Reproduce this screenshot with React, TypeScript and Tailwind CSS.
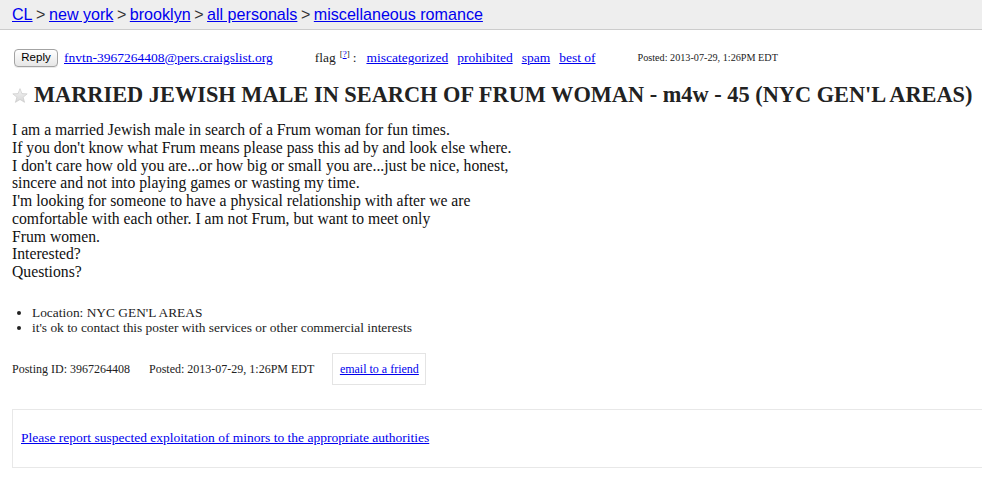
import React from 'react';

const serif = { fontFamily: '"Liberation Serif", "Times New Roman", serif' };

const crumbs = ['CL', 'new york', 'brooklyn', 'all personals', 'miscellaneous romance'];
const flags = ['miscategorized', 'prohibited', 'spam', 'best of'];

const bodyLines = [
  'I am a married Jewish male in search of a Frum woman for fun times.',
  "If you don't know what Frum means please pass this ad by and look else where.",
  "I don't care how old you are...or how big or small you are...just be nice, honest,",
  'sincere and not into playing games or wasting my time.',
  "I'm looking for someone to have a physical relationship with after we are",
  'comfortable with each other. I am not Frum, but want to meet only',
  'Frum women.',
  'Interested?',
  'Questions?',
];

const Star = () => (
  <svg width="16" height="15" viewBox="0 0 24 23" className="shrink-0">
    <defs>
      <linearGradient id="sg" x1="0" y1="0" x2="0" y2="1">
        <stop offset="0" stopColor="#f4f4f4" />
        <stop offset="1" stopColor="#d6d6d6" />
      </linearGradient>
    </defs>
    <polygon
      points="12,1 15,8.6 23,9 16.8,14.2 19,22 12,17.6 5,22 7.2,14.2 1,9 9,8.6"
      fill="url(#sg)"
      stroke="#c8c8c8"
      strokeWidth="1"
    />
  </svg>
);

export default function App() {
  return (
    <div className="min-h-[484px] bg-white text-[#222]" style={serif}>
      {/* breadcrumb bar */}
      <div
        className="h-[30px] bg-[#eeeeee] border-b border-[#cccccc] flex items-center px-3 text-[16.1px] text-[#333]"
        style={{ fontFamily: '"Liberation Sans", Arial, sans-serif' }}
      >
        {crumbs.map((c, i) => (
          <React.Fragment key={c}>
            {i > 0 && <span className="mx-[3.5px]">&gt;</span>}
            <a href="#" className="text-[#0000ee] underline">{c}</a>
          </React.Fragment>
        ))}
      </div>

      <div className="pl-3">
        {/* reply / flag row */}
        <div className="flex items-center mt-[19px] h-[18px] text-[13.5px]">
          <button
            className="ml-[2px] h-[18px] w-[44px] rounded-[4px] border border-[#a3a3a3] bg-gradient-to-b from-white to-[#e6e6e6] text-[11.5px] text-black leading-none shadow-[0_1px_0_rgba(0,0,0,0.08)]"
            style={{ fontFamily: '"Liberation Sans", Arial, sans-serif' }}
          >
            Reply
          </button>
          <a href="#" className="ml-[6px] text-[#0000ee] underline">fnvtn-3967264408@pers.craigslist.org</a>
          <span className="ml-[42px] text-[#222]">flag</span>
          <sup className="ml-[4px] text-[9px] text-[#222]">
            [<a href="#" className="text-[#0000ee] underline">?</a>]
          </sup>
          <span className="ml-[3px]">:</span>
          <div className="ml-[10px] flex gap-[9px]">
            {flags.map((f) => (
              <a key={f} href="#" className="text-[#0000ee] underline">{f}</a>
            ))}
          </div>
          <span className="ml-[42px] text-[10.2px] text-[#222]">Posted: 2013-07-29, 1:26PM EDT</span>
        </div>

        {/* title */}
        <div className="flex items-center mt-[15px] gap-[6px]">
          <Star />
          <h2 className="text-[22.35px] font-bold leading-[26px] text-[#222] whitespace-nowrap">
            MARRIED JEWISH MALE IN SEARCH OF FRUM WOMAN - m4w - 45 (NYC GEN'L AREAS)
          </h2>
        </div>

        {/* body */}
        <div className="mt-[13px] text-[15.7px] leading-[17.75px] text-[#111]">
          {bodyLines.map((l) => (
            <div key={l}>{l}</div>
          ))}
        </div>

        {/* attributes */}
        <ul className="mt-[24px] text-[13.4px] leading-[15px] list-disc pl-5">
          <li>Location: NYC GEN'L AREAS</li>
          <li>it's ok to contact this poster with services or other commercial interests</li>
        </ul>

        {/* posting info */}
        <div className="mt-[18px] flex items-center text-[12px]">
          <span>Posting ID: 3967264408</span>
          <span className="ml-[19px]">Posted: 2013-07-29, 1:26PM EDT</span>
          <div className="ml-[18px] h-[32px] w-[94px] border border-[#e4e4e4] flex items-center justify-center">
            <a href="#" className="text-[#0000ee] underline">email to a friend</a>
          </div>
        </div>

        {/* report box */}
        <div className="mt-[24px] h-[59px] border border-r-0 border-[#e8e8e8] flex items-center pl-2 text-[13.5px]">
          <a href="#" className="text-[#0000ee] underline">
            Please report suspected exploitation of minors to the appropriate authorities
          </a>
        </div>
      </div>
    </div>
  );
}
